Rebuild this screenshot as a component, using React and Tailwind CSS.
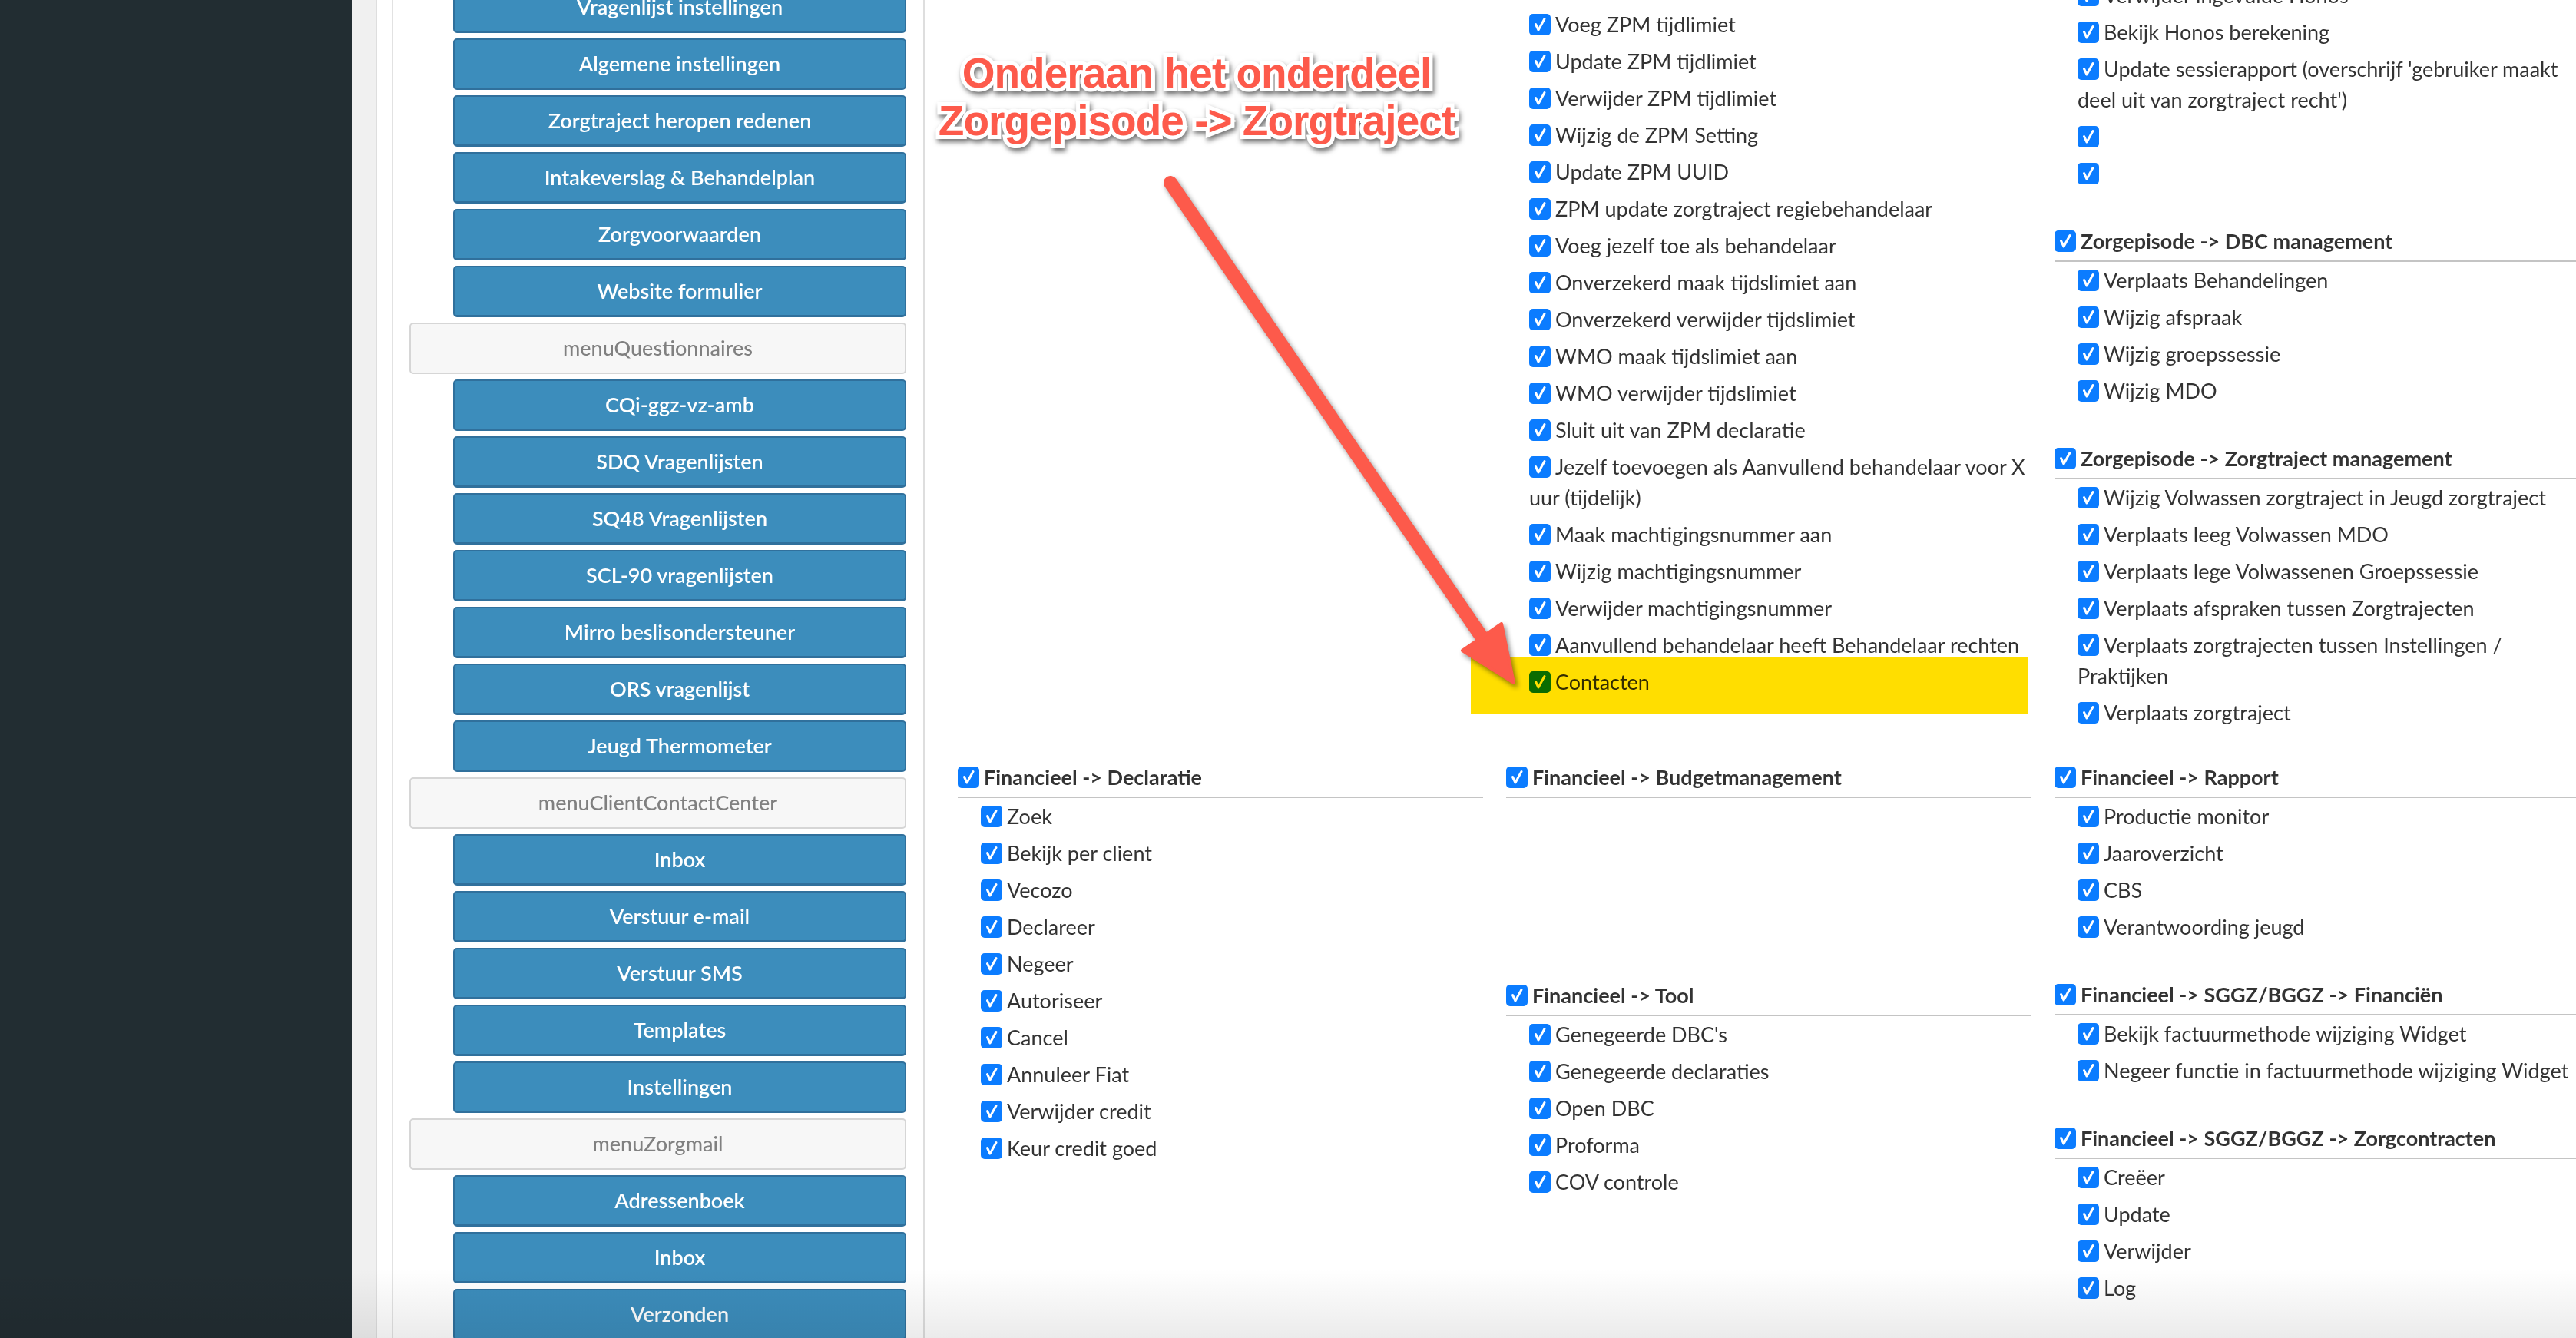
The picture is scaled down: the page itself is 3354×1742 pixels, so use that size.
import React from 'react';

const menu = [
  'Vragenlijst instellingen',
  'Algemene instellingen',
  'Zorgtraject heropen redenen',
  'Intakeverslag & Behandelplan',
  'Zorgvoorwaarden',
  'Website formulier',
  { kop: 'menuQuestionnaires' },
  'CQi-ggz-vz-amb',
  'SDQ Vragenlijsten',
  'SQ48 Vragenlijsten',
  'SCL-90 vragenlijsten',
  'Mirro beslisondersteuner',
  'ORS vragenlijst',
  'Jeugd Thermometer',
  { kop: 'menuClientContactCenter' },
  'Inbox',
  'Verstuur e-mail',
  'Verstuur SMS',
  'Templates',
  'Instellingen',
  { kop: 'menuZorgmail' },
  'Adressenboek',
  'Inbox',
  'Verzonden',
];

const zpmRechten = [
  'Wijzig ZPM zorgtraject begindatum',
  'Voeg ZPM tijdlimiet',
  'Update ZPM tijdlimiet',
  'Verwijder ZPM tijdlimiet',
  'Wijzig de ZPM Setting',
  'Update ZPM UUID',
  'ZPM update zorgtraject regiebehandelaar',
  'Voeg jezelf toe als behandelaar',
  'Onverzekerd maak tijdslimiet aan',
  'Onverzekerd verwijder tijdslimiet',
  'WMO maak tijdslimiet aan',
  'WMO verwijder tijdslimiet',
  'Sluit uit van ZPM declaratie',
  'Jezelf toevoegen als Aanvullend behandelaar voor X uur (tijdelijk)',
  'Maak machtigingsnummer aan',
  'Wijzig machtigingsnummer',
  'Verwijder machtigingsnummer',
  'Aanvullend behandelaar heeft Behandelaar rechten',
];

const honosRechten = [
  'Verwijder ingevulde Honos',
  'Bekijk Honos berekening',
  "Update sessierapport (overschrijf 'gebruiker maakt deel uit van zorgtraject recht')",
  '',
  '',
];

function Vinkje() {
  return (
    <span className="inline-flex align-middle -mt-[6px] mr-[6px] w-7 h-7 rounded-[5px] bg-[#0b7cff] items-center justify-center">
      <svg viewBox="0 0 28 28" className="w-7 h-7">
        <path d="M8.5 13.5 L12 21 L20 6.5" stroke="#fff" strokeWidth="3" fill="none" strokeLinecap="round" strokeLinejoin="round" />
      </svg>
    </span>
  );
}

function Recht({ label, children }) {
  return (
    <div className="relative leading-[40px] mb-2 text-[#333]">
      {children}
      <Vinkje />
      {label}
    </div>
  );
}

function Groep({ titel, items = [], minH, className = 'mb-[48px]' }) {
  return (
    <div className={className} style={minH ? { minHeight: minH } : undefined}>
      <div className="font-bold leading-[40px] pb-[5px] border-b-2 border-[#c4c4c4] text-[#333]">
        <Vinkje />
        {titel}
      </div>
      <div className="mt-1 pl-[30px]">
        {items.map((t, i) => (
          <Recht key={i} label={t} />
        ))}
      </div>
    </div>
  );
}

export default function App() {
  return (
    <div className="relative w-[3354px] h-[1742px] overflow-hidden flex bg-white font-['Lato',sans-serif] text-[27px]">
      {/* donkere zijbalk */}
      <div className="w-[458px] shrink-0 bg-[#222d32]" />

      {/* menu-paneel */}
      <div className="w-[33px] shrink-0 bg-[#f0f0f0] border-r-2 border-[#dedede]" />
      <div className="w-[21px] shrink-0 bg-white border-r-2 border-[#e2e2e2]" />
      <div className="w-[692px] shrink-0 border-r-2 border-[#dedede] pl-[21px] pr-[22px]">
        <div className="-mt-[24px] flex flex-col gap-[7px]">
          {menu.map((m, i) =>
            typeof m === 'string' ? (
              <div
                key={i}
                className="ml-[57px] h-[67px] flex items-center justify-center rounded-[5px] bg-[#3c8dbc] border-2 border-b-[3px] border-[#30709c] text-white font-semibold"
              >
                {m}
              </div>
            ) : (
              <div
                key={i}
                className="h-[67px] flex items-center justify-center rounded-[5px] bg-[#f7f7f7] border-2 border-[#d6d6d6] text-[#808080] font-medium"
              >
                {m.kop}
              </div>
            )
          )}
        </div>
      </div>

      {/* rechtenoverzicht */}
      <div className="flex-1 pl-[43px]">
        <div className="grid grid-cols-[684px_684px_684px] gap-x-[30px] -mt-[36px]">
          <div />
          <div className="pl-[30px]">
            {zpmRechten.map((t, i) => (
              <Recht key={i} label={t} />
            ))}
            <Recht label="Contacten">
              <span className="absolute -left-[76px] -top-[12px] w-[725px] h-[74px] bg-[#ffde00] mix-blend-multiply" />
            </Recht>
          </div>
          <div className="pt-[10px]">
            <div className="pl-[30px] mb-[48px]">
              {honosRechten.map((t, i) => (
                <Recht key={i} label={t} />
              ))}
            </div>
            <Groep
              titel="Zorgepisode -> DBC management"
              items={['Verplaats Behandelingen', 'Wijzig afspraak', 'Wijzig groepssessie', 'Wijzig MDO']}
            />
            <Groep
              titel="Zorgepisode -> Zorgtraject management"
              className="mb-0"
              items={[
                'Wijzig Volwassen zorgtraject in Jeugd zorgtraject',
                'Verplaats leeg Volwassen MDO',
                'Verplaats lege Volwassenen Groepssessie',
                'Verplaats afspraken tussen Zorgtrajecten',
                'Verplaats zorgtrajecten tussen Instellingen / Praktijken',
                'Verplaats zorgtraject',
              ]}
            />
          </div>
        </div>

        <div className="grid grid-cols-[684px_684px_684px] gap-x-[30px] mt-[36px]">
          <div>
            <Groep
              titel="Financieel -> Declaratie"
              items={[
                'Zoek',
                'Bekijk per client',
                'Vecozo',
                'Declareer',
                'Negeer',
                'Autoriseer',
                'Cancel',
                'Annuleer Fiat',
                'Verwijder credit',
                'Keur credit goed',
              ]}
            />
          </div>
          <div>
            <Groep titel="Financieel -> Budgetmanagement" minH={236} />
            <Groep
              titel="Financieel -> Tool"
              items={["Genegeerde DBC's", 'Genegeerde declaraties', 'Open DBC', 'Proforma', 'COV controle']}
            />
          </div>
          <div>
            <Groep
              titel="Financieel -> Rapport"
              items={['Productie monitor', 'Jaaroverzicht', 'CBS', 'Verantwoording jeugd']}
            />
            <Groep
              titel="Financieel -> SGGZ/BGGZ -> Financiën"
              items={['Bekijk factuurmethode wijziging Widget', 'Negeer functie in factuurmethode wijziging Widget']}
            />
            <Groep
              titel="Financieel -> SGGZ/BGGZ -> Zorgcontracten"
              items={['Creëer', 'Update', 'Verwijder', 'Log']}
            />
          </div>
        </div>
      </div>

      {/* toelichting met pijl */}
      <div className="absolute left-[1150px] top-[64px] w-[816px] text-center leading-[62px] text-[55px] font-bold tracking-[-1px] text-[#fd5a4b] font-['Liberation_Sans',Arial,sans-serif] [-webkit-text-stroke:10px_#fff] [paint-order:stroke_fill] [filter:drop-shadow(2px_4px_3px_rgba(0,0,0,0.55))]">
        Onderaan het onderdeel
        <br />
        Zorgepisode -&gt; Zorgtraject
      </div>
      <svg
        className="absolute left-0 top-0 w-[3354px] h-[1742px] pointer-events-none [filter:drop-shadow(3px_4px_3px_rgba(0,0,0,0.45))]"
        viewBox="0 0 3354 1742"
      >
        <line x1="1524" y1="238" x2="1940" y2="845" stroke="#fd5a4b" strokeWidth="18" strokeLinecap="round" />
        <polygon points="1971,889 1955,812 1904,847" fill="#fd5a4b" stroke="#fd5a4b" strokeWidth="4" strokeLinejoin="round" />
      </svg>

      {/* schaduw onderrand */}
      <div className="absolute left-0 right-0 bottom-0 h-[90px] bg-linear-to-b from-transparent to-[rgba(0,0,0,0.08)] pointer-events-none" />
    </div>
  );
}
